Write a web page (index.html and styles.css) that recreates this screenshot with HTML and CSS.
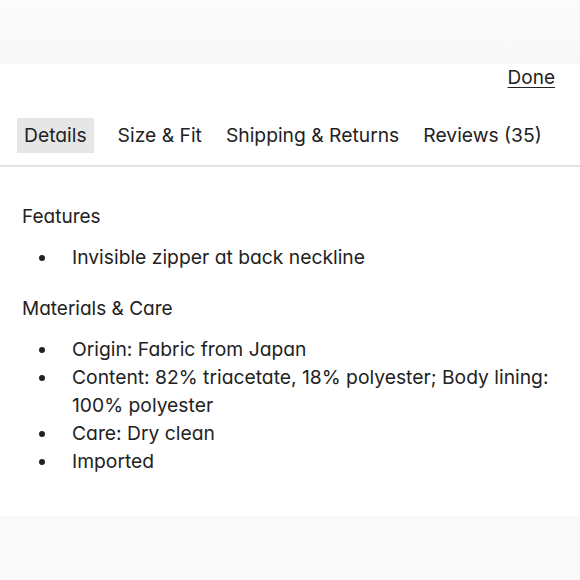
FILE: index.html
```html
<!DOCTYPE html>
<html>
<head>
<meta charset="utf-8">
<link rel="stylesheet" href="styles.css">
</head>
<body>
<div class="top"></div>
<div class="panel">
  <div class="done-row"><a class="done" href="#">Done</a></div>
  <nav class="tabs">
    <span class="tab active">Details</span>
    <span class="tab">Size &amp; Fit</span>
    <span class="tab">Shipping &amp; Returns</span>
    <span class="tab">Reviews (35)</span>
  </nav>
  <div class="content">
    <h3 class="heading">Features</h3>
    <ul class="list">
      <li>Invisible zipper at back neckline</li>
    </ul>
    <h3 class="heading">Materials &amp; Care</h3>
    <ul class="list">
      <li>Origin: Fabric from Japan</li>
      <li>Content: 82% triacetate, 18% polyester; Body lining: 100% polyester</li>
      <li>Care: Dry clean</li>
      <li>Imported</li>
    </ul>
  </div>
</div>
</body>
</html>
```
FILE: styles.css
```css
html, body {
  margin: 0;
  padding: 0;
}
body {
  width: 580px;
  height: 580px;
  overflow: hidden;
  background: #f9f9f9;
  font-family: Inter, "Noto Sans", sans-serif;
  font-feature-settings: "cv11" 1;
  color: #222;
}
.top {
  height: 64px;
  background: linear-gradient(#fbfbfb, #f8f8f8);
}
.panel {
  background: #fff;
  height: 452px;
}
.done-row {
  display: flex;
  justify-content: flex-end;
  padding: 2px 25px 0 0;
}
.done {
  color: #222;
  font-size: 19px;
  line-height: 24px;
  text-decoration: underline;
  text-underline-offset: 3px;
}
.tabs {
  display: flex;
  gap: 24px;
  margin-top: 28px;
  padding: 0 0 12px 17px;
  border-bottom: 2px solid #e3e3e3;
}
.tab {
  font-size: 19.3px;
  line-height: 35px;
  white-space: nowrap;
}
.tab.active {
  padding: 0 7px;
  background: #e6e6e6;
}
.content {
  padding: 36px 22px 0 22px;
}
.heading {
  margin: 0;
  font-size: 19px;
  font-weight: 400;
  line-height: 28px;
}
.list {
  margin: 12px 0 24px 0;
  padding: 0;
  list-style: none;
}
.list li {
  position: relative;
  padding-left: 50px;
  font-size: 19.3px;
  line-height: 28px;
}
.list li::before {
  content: "";
  position: absolute;
  left: 17px;
  top: 12px;
  width: 6px;
  height: 6px;
  border-radius: 50%;
  background: #222;
}
```
